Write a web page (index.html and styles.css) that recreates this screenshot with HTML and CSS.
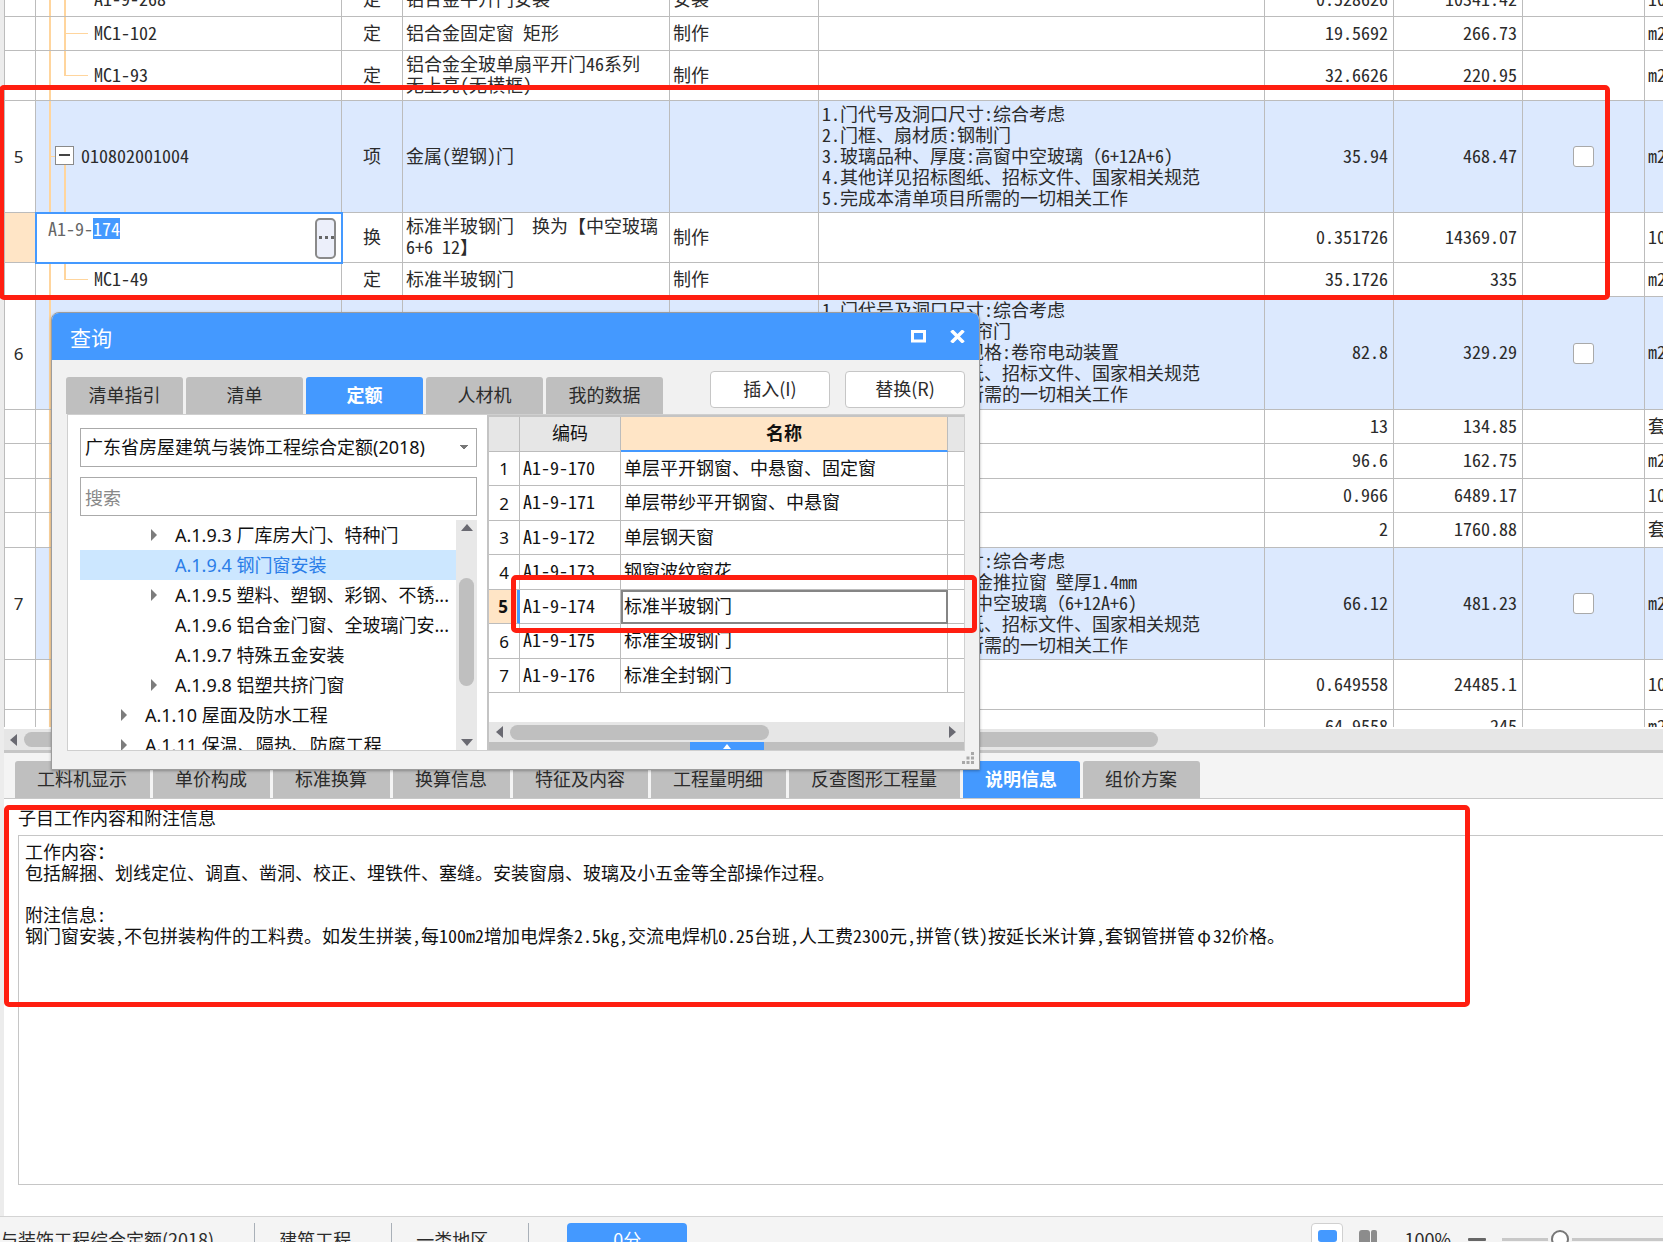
FILE: index.html
```html
<!DOCTYPE html>
<html lang="zh-CN">
<head>
<meta charset="utf-8">
<title>工程计价</title>
<link rel="stylesheet" href="styles.css">
</head>
<body>
<main class="workspace">
  <section class="bill-pane">
    <div class="bill-view">
      <table class="grid bill">
        <colgroup>
          <col class="c-num"><col class="c-code"><col class="c-type"><col class="c-name"><col class="c-kind"><col class="c-feature"><col class="c-qty"><col class="c-qty"><col class="c-check"><col class="c-unit">
        </colgroup>
        <tbody>
          <tr class="h34"><td class="num"></td><td class="code child">A1-9-268</td><td class="mid">定</td><td>铝合金平开门安装</td><td>安装</td><td></td><td class="qty">0.528626</td><td class="qty">10341.42</td><td></td><td class="unit">100m2</td></tr>
          <tr class="h34"><td class="num"></td><td class="code child">MC1-102</td><td class="mid">定</td><td>铝合金固定窗 矩形</td><td>制作</td><td></td><td class="qty">19.5692</td><td class="qty">266.73</td><td></td><td class="unit">m2</td></tr>
          <tr class="h50"><td class="num"></td><td class="code child last">MC1-93</td><td class="mid">定</td><td>铝合金全玻单扇平开门46系列<br>无上亮(无横框)</td><td>制作</td><td></td><td class="qty">32.6626</td><td class="qty">220.95</td><td></td><td class="unit">m2</td></tr>
          <tr class="h112 item"><td class="num">5</td><td class="code parent"><div class="node"><button class="fold" aria-label="折叠"></button>010802001004</div></td><td class="mid">项</td><td>金属(塑钢)门</td><td></td><td>1.门代号及洞口尺寸:综合考虑<br>2.门框、扇材质:钢制门<br>3.玻璃品种、厚度:高窗中空玻璃<span class="full">（</span>6+12A+6)<br>4.其他详见招标图纸、招标文件、国家相关规范<br>5.完成本清单项目所需的一切相关工作</td><td class="qty">35.94</td><td class="qty">468.47</td><td class="mid"><input class="tick" type="checkbox" aria-label="第5项"></td><td class="unit">m2</td></tr>
          <tr class="h50"><td class="num current"></td><td class="editing"><div class="editor"><input class="code-input" id="code-input" type="text" value="A1-9-174" aria-label="编码"><button class="more" aria-label="更多"><svg width="16" height="4" viewBox="0 0 16 4"><path d="M1 0h3v3H1zM7 0h3v3H7zM13 0h3v3h-3z" fill="#666"/></svg></button></div></td><td class="mid">换</td><td>标准半玻钢门<span class="full">　</span>换为【中空玻璃<br>6+6 12】</td><td>制作</td><td></td><td class="qty">0.351726</td><td class="qty">14369.07</td><td></td><td class="unit">100m2</td></tr>
          <tr class="h34"><td class="num"></td><td class="code child last">MC1-49</td><td class="mid">定</td><td>标准半玻钢门</td><td>制作</td><td></td><td class="qty">35.1726</td><td class="qty">335</td><td></td><td class="unit">m2</td></tr>
          <tr class="h113 item"><td class="num">6</td><td class="code parent"></td><td></td><td></td><td></td><td>1.门代号及洞口尺寸:综合考虑<br>2.门框、扇材质:卷帘门<br>3.启动装置品种、规格:卷帘电动装置<br>4.其他详见招标图纸、招标文件、国家相关规范<br>5.完成本清单项目所需的一切相关工作</td><td class="qty">82.8</td><td class="qty">329.29</td><td class="mid"><input class="tick" type="checkbox" aria-label="第6项"></td><td class="unit">m2</td></tr>
          <tr class="h34"><td class="num"></td><td class="code"></td><td></td><td></td><td></td><td></td><td class="qty">13</td><td class="qty">134.85</td><td></td><td class="unit">套</td></tr>
          <tr class="h35"><td class="num"></td><td class="code"></td><td></td><td></td><td></td><td></td><td class="qty">96.6</td><td class="qty">162.75</td><td></td><td class="unit">m2</td></tr>
          <tr class="h34"><td class="num"></td><td class="code"></td><td></td><td></td><td></td><td></td><td class="qty">0.966</td><td class="qty">6489.17</td><td></td><td class="unit">100m2</td></tr>
          <tr class="h35"><td class="num"></td><td class="code"></td><td></td><td></td><td></td><td></td><td class="qty">2</td><td class="qty">1760.88</td><td></td><td class="unit">套</td></tr>
          <tr class="h112 item"><td class="num">7</td><td class="code parent"></td><td></td><td></td><td></td><td>1.门代号及洞口尺寸:综合考虑<br>2.框、扇材质:铝合金推拉窗 壁厚1.4mm<br>3.玻璃品种、厚度:中空玻璃<span class="full">（</span>6+12A+6)<br>4.其他详见招标图纸、招标文件、国家相关规范<br>5.完成本清单项目所需的一切相关工作</td><td class="qty">66.12</td><td class="qty">481.23</td><td class="mid"><input class="tick" type="checkbox" aria-label="第7项"></td><td class="unit">m2</td></tr>
          <tr class="h50"><td class="num"></td><td class="code"></td><td></td><td></td><td></td><td></td><td class="qty">0.649558</td><td class="qty">24485.1</td><td></td><td class="unit">100m2</td></tr>
          <tr class="h34"><td class="num"></td><td class="code"></td><td></td><td></td><td></td><td></td><td class="qty">64.9558</td><td class="qty">245</td><td></td><td class="unit">m2</td></tr>
        </tbody>
      </table>
    </div>
    <div class="hbar bill-bar"><svg class="arrow" width="7" height="12" viewBox="0 0 7 12"><path d="M7 0v12L0 6z"/></svg><div class="bill-thumb thumb"></div></div>
  </section>

  <section class="detail-pane">
    <nav class="tabs detail-tabs">
      <button class="tab">工料机显示</button><button class="tab">单价构成</button><button class="tab">标准换算</button><button class="tab">换算信息</button><button class="tab">特征及内容</button><button class="tab">工程量明细</button><button class="tab">反查图形工程量</button><button class="tab active">说明信息</button><button class="tab">组价方案</button>
    </nav>
    <div class="detail">
      <h2 class="detail-label" id="notes-label">子目工作内容和附注信息</h2>
      <div class="notes" role="document" aria-labelledby="notes-label">
        <p>工作内容：<br>包括解捆、划线定位、调直、凿洞、校正、埋铁件、塞缝。安装窗扇、玻璃及小五金等全部操作过程。</p>
        <p>附注信息:<br>钢门窗安装,不包拼装构件的工料费。如发生拼装,每100m2增加电焊条2.5kg,交流电焊机0.25台班,人工费2300元,拼管(铁)按延长米计算,套钢管拼管<span class="symbol">φ</span>32价格。</p>
      </div>
    </div>
  </section>
</main>

<footer class="status">
  <span class="status-item first">与装饰工程综合定额(2018)</span>
  <span class="status-item">建筑工程</span>
  <span class="status-item">一类地区</span>
  <button class="score">0分</button>
  <div class="zoom">
    <button class="view on" aria-label="单窗口"><svg width="20" height="12" viewBox="0 0 20 12"><rect width="19" height="12" rx="3" fill="#4499ff"/></svg></button>
    <button class="view" aria-label="双窗口"><svg width="20" height="20" viewBox="0 0 20 20"><rect width="11" height="20" rx="3" fill="#8c8c8c"/><rect x="12" width="6" height="20" rx="2" fill="#8c8c8c"/></svg></button>
    <label class="percent" for="zoom">100%</label>
    <button class="minus" aria-label="缩小"></button>
    <input class="slider" id="zoom" type="range" min="0" max="100" value="34">
  </div>
</footer>

<section class="dialog" role="dialog" aria-labelledby="dlg-title">
  <header class="dialog-title">
    <h1 id="dlg-title">查询</h1>
    <button class="win" aria-label="最大化"><svg width="15" height="13" viewBox="0 0 15 13"><path d="M1.5 1.5h12v9.500h-12z" fill="none" stroke="#fff" stroke-width="3"/></svg></button>
    <button class="win" aria-label="关闭"><svg width="15" height="13" viewBox="0 0 15 13"><path d="M1.500 .5L13.500 12.500M13.500 .5L1.500 12.500" stroke="#fff" stroke-width="3.500"/></svg></button>
  </header>
  <div class="dialog-bar">
    <nav class="tabs">
      <button class="tab wide">清单指引</button><button class="tab wide">清单</button><button class="tab wide active">定额</button><button class="tab wide">人材机</button><button class="tab wide">我的数据</button>
    </nav>
    <div class="actions"><button class="action">插入(I)</button><button class="action">替换(R)</button></div>
  </div>
  <div class="dialog-body">
    <aside class="library">
      <select class="combo" aria-label="定额库"><option>广东省房屋建筑与装饰工程综合定额(2018)</option></select>
      <input class="search" type="text" placeholder="搜索" aria-label="搜索">
      <div class="tree-view">
        <ul class="tree">
          <li class="leaf fork">A.1.9.3 厂库房大门、特种门</li>
          <li class="leaf chosen">A.1.9.4 钢门窗安装</li>
          <li class="leaf fork">A.1.9.5 塑料、塑钢、彩钢、不锈...</li>
          <li class="leaf">A.1.9.6 铝合金门窗、全玻璃门安...</li>
          <li class="leaf">A.1.9.7 特殊五金安装</li>
          <li class="leaf fork">A.1.9.8 铝塑共挤门窗</li>
          <li class="chapter fork">A.1.10 屋面及防水工程</li>
          <li class="chapter fork">A.1.11 保温、隔热、防腐工程</li>
        </ul>
        <div class="vbar"><svg class="arrow" width="12" height="7" viewBox="0 0 12 7"><path d="M0 7h12L6 0z"/></svg><div class="vtrack"><div class="vthumb thumb"></div></div><svg class="arrow" width="12" height="7" viewBox="0 0 12 7"><path d="M0 0h12L6 7z"/></svg></div>
      </div>
    </aside>
    <div class="results">
      <div class="results-view">
        <table class="grid quota">
          <colgroup><col class="q-num"><col class="q-code"><col class="q-name"><col class="q-rest"></colgroup>
          <thead><tr><th></th><th>编码</th><th class="sorted">名称</th><th></th></tr></thead>
          <tbody>
            <tr><td class="num">1</td><td>A1-9-170</td><td>单层平开钢窗、中悬窗、固定窗</td><td></td></tr>
            <tr><td class="num">2</td><td>A1-9-171</td><td>单层带纱平开钢窗、中悬窗</td><td></td></tr>
            <tr><td class="num">3</td><td>A1-9-172</td><td>单层钢天窗</td><td></td></tr>
            <tr><td class="num">4</td><td>A1-9-173</td><td>钢窗波纹窗花</td><td></td></tr>
            <tr><td class="num current bold">5</td><td>A1-9-174</td><td class="focus">标准半玻钢门</td><td></td></tr>
            <tr><td class="num">6</td><td>A1-9-175</td><td>标准全玻钢门</td><td></td></tr>
            <tr><td class="num">7</td><td>A1-9-176</td><td>标准全封钢门</td><td></td></tr>
          </tbody>
        </table>
      </div>
      <div class="hbar"><svg class="arrow" width="7" height="12" viewBox="0 0 7 12"><path d="M7 0v12L0 6z"/></svg><div class="htrack"><div class="hthumb thumb"></div></div><svg class="arrow" width="7" height="12" viewBox="0 0 7 12"><path d="M0 0v12l7-6z"/></svg></div>
      <div class="drawer"><button class="drawer-pull" aria-label="展开"><svg width="8" height="5" viewBox="0 0 8 5"><path d="M0 5h8L4 0z" fill="#fff"/></svg></button></div>
    </div>
  </div>
  <svg class="grip" width="12" height="12" viewBox="0 0 12 12"><path d="M9 0h3v3H9zM4.500 4.500h3v3h-3zM9 4.500h3v3H9zM0 9h3v3H0zM4.500 9h3v3h-3zM9 9h3v3H9z" fill="#a8a8a8"/></svg>
</section>

<div class="mark mark-bill"></div>
<div class="mark mark-quota"></div>
<div class="mark mark-notes"></div>
<script src="script.js"></script>
</body>
</html>
```

FILE: styles.css
```css
* { box-sizing: border-box; }
html, body { height: 100%; }
body {
  margin: 0;
  position: relative;
  display: flex;
  flex-direction: column;
  overflow: hidden;
  background: #fff;
  color: #2b2b2b;
  font: 18px/21px "Noto Sans CJK SC", sans-serif;
}
button, input, select { font: inherit; color: inherit; }
button { padding: 0; border: 0; background: none; }

.workspace {
  flex: 1;
  min-height: 0;
  display: flex;
  flex-direction: column;
  padding-left: 4px;
  background: #ececec;
}
.bill-pane {
  flex: 752 1 0;
  min-height: 0;
  display: flex;
  flex-direction: column;
  gap: 2px;
  background: #fff;
  border-bottom: 3px solid #c6c6c6;
}
.bill-view { flex: 1; min-height: 0; overflow: hidden; }

/* grids: Latin characters take half a CJK cell */
.grid {
  width: 100%;
  table-layout: fixed;
  border-collapse: separate;
  border-spacing: 0;
  font-feature-settings: "hwid";
}
.grid td, .grid th {
  padding: 0 3px 3px;
  border-right: 1px solid #bcbcbc;
  border-bottom: 1px solid #bcbcbc;
  overflow: hidden;
  white-space: nowrap;
  vertical-align: middle;
}
.full { font-feature-settings: normal; }
.bill { margin-top: -17px; border-left: 1px solid #bcbcbc; }
.c-num { width: 31px; }
.c-code { width: 306px; }
.c-type { width: 61px; }
.c-name { width: 267px; }
.c-kind { width: 149px; }
.c-qty { width: 129px; }
.c-check { width: 122px; }
.c-unit { width: 18px; }
.h34 { height: 34px; }
.h35 { height: 35px; }
.h50 { height: 50px; }
.h112 { height: 112px; }
.h113 { height: 113px; }
.item { background-color: #dce9fe; }
.grid .num {
  padding: 0 3px 0 0;
  text-align: center;
  background: #fff;
  font-family: "Noto Sans", sans-serif;
  font-size: 17px;
}
.grid .current { background: #ffe5c6; }
.grid .bold { font-weight: 700; border-right: 3px solid #4499ff; }
.grid .mid { text-align: center; }
.grid .qty { text-align: right; padding-right: 5px; }
.grid .unit { padding-right: 0; border-right: 0; text-overflow: clip; }

/* tree guides drawn behind the code column */
.grid .code {
  padding-left: 19px;
  --guide: linear-gradient(#ffd59d, #ffd59d);
  background-image: var(--guide);
  background-repeat: no-repeat;
  background-size: 2px 100%;
  background-position: 13px 0;
}
.grid .child {
  padding-left: 58px;
  background-image: var(--guide), var(--guide), var(--guide);
  background-size: 2px 100%, 2px 100%, 24px 1px;
  background-position: 13px 0, 28px 0, 28px 50%;
}
.grid .last { background-size: 2px 100%, 2px 50%, 24px 1px; }
.grid .parent {
  background-image: var(--guide), var(--guide), var(--guide);
  background-size: 2px 100%, 2px 50%, 8px 1px;
  background-position: 13px 0, 28px 100%, 13px 50%;
}
.node { display: flex; align-items: center; gap: 7px; }
.fold {
  width: 19px;
  height: 19px;
  border: 1px solid #8a8a8a;
  background: linear-gradient(#444, #444) center / 11px 2px no-repeat #fff;
}
.grid .editing { padding: 0; outline: 2px solid #4499ff; outline-offset: -1px; background: #fff; }
.editor { display: flex; height: 48px; padding: 4px 5px 4px 12px; }
.code-input {
  flex: 1;
  min-width: 0;
  height: 21px;
  padding: 0;
  border: 0;
  outline: 0;
  background: none;
  color: #666;
  caret-color: transparent;
  font-feature-settings: "hwid";
}
.code-input::selection { background: #4499ff; color: #fff; }
.more {
  width: 21px;
  height: 41px;
  display: flex;
  align-items: center;
  justify-content: center;
  border: 2px solid #8a8a8a;
  border-radius: 5px;
  background: #eceffa;
}
.tick {
  appearance: none;
  display: block;
  width: 21px;
  height: 21px;
  margin: 3px auto 0;
  border: 1px solid #a9a9a9;
  border-radius: 3px;
  background: #fff;
}

.hbar { display: flex; align-items: center; height: 20px; padding: 0 8px 0 7px; gap: 7px; background: #e6e6e6; }
.bill-bar { height: 21px; padding: 0 6px; }
.arrow { flex: none; fill: #6a6a72; }
.thumb { background: #bfbfbf; border-radius: 8px; }
.bill-thumb { width: 1134px; height: 15px; }

.detail-pane { flex: 464 1 0; min-height: 0; display: flex; flex-direction: column; background: #fff; }
.tabs { display: flex; gap: 3px; }
.detail-tabs { padding: 8px 11px 0; background: #f4f4f4; border-bottom: 1px solid #c8c8c8; }
.tab {
  height: 37px;
  padding: 0 23px 2px 22px;
  border-radius: 3px 3px 0 0;
  background: #bfbfbf;
  white-space: nowrap;
}
.tab.wide { width: 117px; padding: 0 0 2px; }
.tab.active { background: #4499ff; color: #fff; font-weight: 700; }
.detail {
  flex: 1;
  display: flex;
  flex-direction: column;
  gap: 7px;
  padding: 8px 0 31px 14px;
  color: #111;
  font-feature-settings: "hwid";
}
.detail-label { margin: 0; font-size: 18px; font-weight: 400; }
.notes {
  flex: 1;
  padding: 5px 6px;
  border: 1px solid #c6c6c6;
  border-right: 0;
  background: #fff;
}
.notes p { margin: 0 0 21px; }
.symbol { display: inline-block; width: 18px; text-align: center; }

.status {
  flex: none;
  display: flex;
  align-items: flex-start;
  height: 26px;
  padding-top: 6px;
  overflow: hidden;
  background: #f4f4f4;
  border-top: 1px solid #d4d4d4;
}
.status-item {
  height: 34px;
  padding: 6px 40px 0 24px;
  border-right: 1px solid #a9b0b8;
  white-space: nowrap;
}
.status-item.first { padding-left: 0; }
.score { width: 120px; height: 34px; margin-left: 38px; padding-bottom: 2px; border-radius: 4px; background: #4499ff; color: #fff; }
.zoom { display: flex; align-items: flex-start; margin-left: auto; }
.view { display: flex; width: 32px; height: 34px; margin-right: 9px; padding: 6px 0 0 6px; border: 1px solid transparent; }
.view.on { border-color: #d0d0d0; border-radius: 4px; background: #fff; }
.percent { padding: 6px 17px 0 11px; }
.minus { width: 18px; height: 3px; margin-top: 15px; border-radius: 1px; background: #666; }
.slider { appearance: none; width: 161px; height: 18px; margin: 7px 0 0 16px; background: linear-gradient(#c8c8c8, #c8c8c8) center / 100% 3px no-repeat; }
.slider::-webkit-slider-thumb {
  appearance: none;
  width: 18px;
  height: 18px;
  border: 2px solid #777;
  border-radius: 50%;
  background: #fff;
  box-shadow: 0 0 0 3px #f4f4f4;
}

/* query window floating over the workspace */
.dialog {
  position: absolute;
  left: 51px;
  top: 312px;
  width: 929px;
  height: 458px;
  display: flex;
  flex-direction: column;
  border: 1px solid #9c9c9c;
  border-radius: 8px 8px 0 0;
  background: #f1f1f1;
  box-shadow: 0 1px 3px rgba(0, 0, 0, .3);
  overflow: hidden;
}
.dialog-title { display: flex; align-items: center; gap: 24px; height: 47px; padding: 0 14px 0 18px; background: #4499ff; color: #fff; }
.dialog-title h1 { flex: 1; margin: 0; padding-top: 2px; font-size: 21px; font-weight: 400; }
.win { display: flex; }
.dialog-bar { display: flex; justify-content: space-between; padding: 11px 14px 0; }
.dialog-bar .tabs { padding-top: 6px; }
.actions { display: flex; gap: 15px; }
.action { width: 120px; height: 37px; padding-bottom: 2px; border: 1px solid #c6c6c6; border-radius: 4px; background: #fff; }
.dialog-body { flex: 1; min-height: 0; display: flex; margin: 0 14px 18px 15px; border: 1px solid #cfcfcf; background: #fff; }
.library { flex: 1; min-width: 0; display: flex; flex-direction: column; padding: 13px 10px 0 12px; }
.combo, .search { width: 100%; height: 39px; padding: 0 4px; border: 1px solid #aaa; border-radius: 0; outline: 0; background: #fff; color: #111; }
.combo, .tree { font-family: "Noto Sans", "Noto Sans CJK SC", sans-serif; }
.combo {
  appearance: none;
  background: linear-gradient(to bottom right, #777 50%, transparent 0) right 8px center / 4px 5px no-repeat, linear-gradient(to bottom left, #777 50%, transparent 0) right 12px center / 4px 5px no-repeat #fff;
}
.search { margin-top: 10px; }
.search::placeholder { color: #888; opacity: 1; }
.tree-view { flex: 1; min-height: 0; display: flex; margin-top: 4px; overflow: hidden; }
.tree { flex: 1; min-width: 0; margin: 0; padding: 0; list-style: none; color: #111; }
.tree li { position: relative; height: 30px; line-height: 30px; white-space: nowrap; }
.tree .leaf { padding-left: 95px; }
.tree .chapter { padding-left: 65px; }
.tree .chosen { background: #cce7ff; color: #2a7de8; }
.fork::before {
  content: "";
  position: absolute;
  margin: 9px 0 0 -24px;
  border: 6px solid transparent;
  border-left-color: #7d7d7d;
  border-right: 0;
}
.vbar { display: flex; flex-direction: column; align-items: center; width: 21px; padding: 4px 0; background: #e8e8e8; }
.vtrack { flex: 1; padding-top: 47px; }
.vthumb { width: 15px; height: 108px; }

.results { flex: none; width: 477px; display: flex; flex-direction: column; border-left: 2px solid #c4c4c4; border-top: 2px solid #c4c4c4; }
.results-view { flex: 1; min-height: 0; overflow: hidden; }
.quota { color: #111; }
.q-num { width: 31px; }
.q-code { width: 101px; }
.q-rest { width: 16px; }
.quota thead tr { height: 35px; }
.quota tbody tr { height: 34px; }
.quota tbody tr:nth-child(even) { height: 35px; }
.quota th { background: #e6e6e6; font-weight: 400; }
.quota td:last-child, .quota th:last-child { border-right: 0; }
.quota .sorted { background: #ffe5c6; border-bottom: 2px solid #4499ff; font-weight: 700; }
.quota .focus { outline: 2px solid #858585; outline-offset: -2px; }
.quota .num { padding: 0; }
.htrack { flex: 1; }
.hthumb { width: 259px; height: 15px; }
.drawer { display: flex; justify-content: center; height: 8px; background: #bfbfbf; }
.drawer-pull { display: flex; align-items: center; justify-content: center; width: 74px; background: #4499ff; }
.grip { position: absolute; right: 5px; bottom: 5px; }

/* red annotation frames */
.mark { position: absolute; border: 5px solid #ff1e10; border-radius: 5px; pointer-events: none; }
.mark-bill { left: -1px; top: 85px; width: 1611px; height: 215px; }
.mark-quota { left: 511px; top: 575px; width: 466px; height: 58px; }
.mark-notes { left: 4px; top: 805px; width: 1466px; height: 202px; }
```

FILE: script.js
```javascript
const field = document.getElementById("code-input");
field.focus();
field.setSelectionRange(5, 8);
```
